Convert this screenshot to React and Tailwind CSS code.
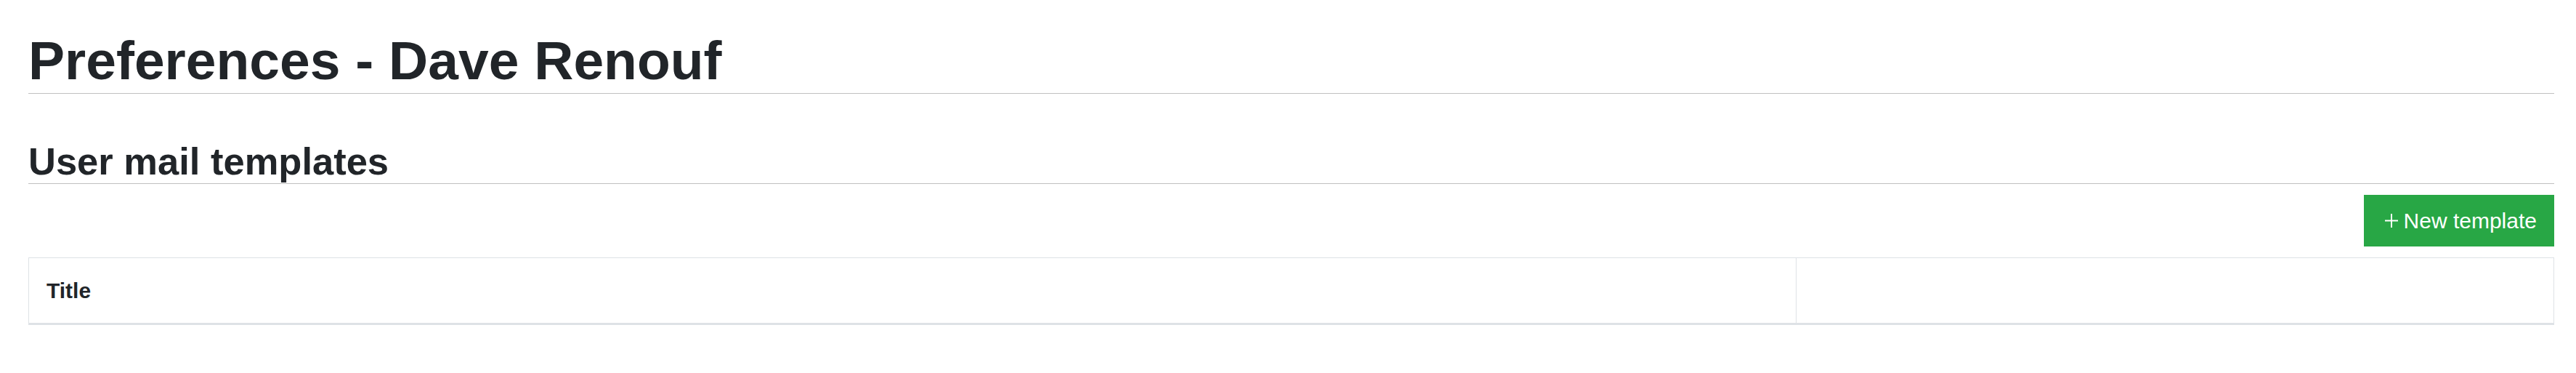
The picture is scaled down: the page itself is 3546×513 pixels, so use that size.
import React from 'react'

// Preferences page: heading, section heading, action bar and an empty templates table
const PlusIcon = () => (
  <svg width="18" height="19" viewBox="0 0 18 19" className="mr-[8px] shrink-0" aria-hidden="true">
    <rect x="0" y="8.5" width="18" height="2" fill="currentColor" />
    <rect x="8" y="0" width="2" height="19" fill="currentColor" />
  </svg>
)

const App = () => {
  const columns = [
    { id: 'title', label: 'Title', width: 'w-[70%]' },
    { id: 'actions', label: '', width: '' }
  ]

  return (
    <div
      className="min-h-screen bg-white pl-[39px] pr-[30px] pt-[38px] text-[#212529]"
      style={{ fontFamily: '"Liberation Sans", Arial, Helvetica, sans-serif' }}
    >
      {/* Page heading */}
      <h1 className="border-b border-[#c0c0c0] text-[75px] font-bold leading-[90px]">
        Preferences - Dave Renouf
      </h1>

      {/* Section heading */}
      <h3 className="mt-[62px] border-b border-[#c0c0c0] text-[52.5px] font-bold leading-[61px]">
        User mail templates
      </h3>

      {/* Actions */}
      <div className="mt-[15px] flex justify-end">
        <button
          type="button"
          className="flex h-[71px] items-center bg-[#28a745] pl-[29px] pr-[24px] text-[30px] leading-[45px] text-white"
        >
          <PlusIcon />
          <span>New template</span>
        </button>
      </div>

      {/* Templates table */}
      <table className="mt-[15px] w-full border-collapse border border-[#dee2e6]">
        <thead>
          <tr>
            {columns.map((col, i) => (
              <th
                key={col.id}
                className={`${col.width} border-b-[3px] border-[#dee2e6] px-[24px] py-[22px] text-left text-[30px] font-bold leading-[45px] ${
                  i > 0 ? 'border-l' : ''
                }`}
              >
                {col.label}
              </th>
            ))}
          </tr>
        </thead>
        <tbody></tbody>
      </table>
    </div>
  )
}

export default App
